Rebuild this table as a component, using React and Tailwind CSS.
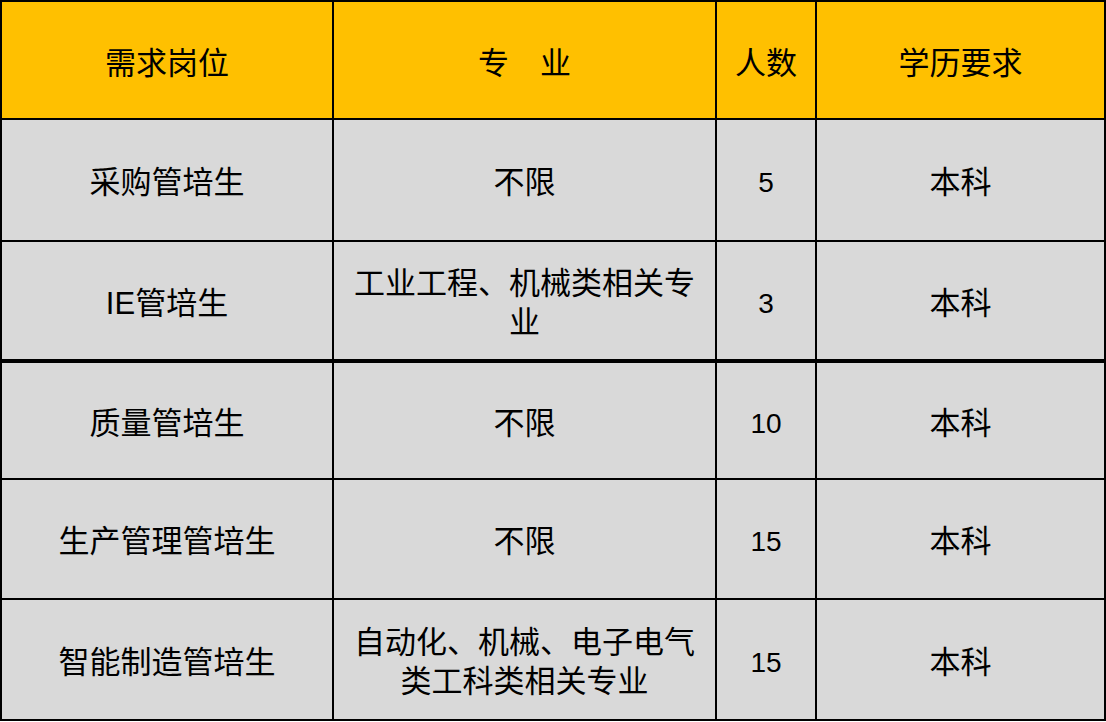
import React from "react";

// Tabla de puestos: encabezado amarillo, filas grises, bordes negros
const rows = [
  { pos: "采购管培生", major: ["不限"], num: "5", edu: "本科", h: "h-[122px]" },
  { pos: "IE管培生", major: ["工业工程、机械类相关专", "业"], num: "3", edu: "本科", h: "h-[120px]", thick: true },
  { pos: "质量管培生", major: ["不限"], num: "10", edu: "本科", h: "h-[118px]" },
  { pos: "生产管理管培生", major: ["不限"], num: "15", edu: "本科", h: "h-[120px]" },
  { pos: "智能制造管培生", major: ["自动化、机械、电子电气", "类工科类相关专业"], num: "15", edu: "本科", h: "h-[121px]" },
];

export default function App() {
  const font = { fontFamily: '"Liberation Sans", "Noto Sans CJK SC", sans-serif' };

  return (
    <div className="w-[1106px] h-[722px] bg-white" style={font}>
      <table className="border-collapse table-fixed w-[1104px] text-[31px] text-black leading-[39px]">
        <colgroup>
          <col className="w-[332px]" />
          <col className="w-[383px]" />
          <col className="w-[100px]" />
          <col className="w-[289px]" />
        </colgroup>
        <thead>
          <tr className="h-[118px] bg-[#ffc000]">
            <th className="border-[2px] border-black font-normal text-center pt-[6px]">需求岗位</th>
            <th className="border-[2px] border-black font-normal text-center pt-[6px]">专　业</th>
            <th className="border-[2px] border-black font-normal text-center pt-[6px]">人数</th>
            <th className="border-[2px] border-black font-normal text-center pt-[6px]">学历要求</th>
          </tr>
        </thead>
        <tbody>
          {rows.map((r, i) => (
            <tr key={i} className={`${r.h} bg-[#d9d9d9]`}>
              <td className={`border-[2px] border-black text-center pt-[5px] ${r.thick ? "border-b-[4px]" : ""}`}>{r.pos}</td>
              <td className={`border-[2px] border-black text-center pt-[5px] ${r.thick ? "border-b-[4px]" : ""}`}>
                {r.major.map((m, j) => (
                  <div key={j}>{m}</div>
                ))}
              </td>
              <td className={`border-[2px] border-black text-center pt-[5px] text-[28px] ${r.thick ? "border-b-[4px]" : ""}`}>{r.num}</td>
              <td className={`border-[2px] border-black text-center pt-[5px] ${r.thick ? "border-b-[4px]" : ""}`}>{r.edu}</td>
            </tr>
          ))}
        </tbody>
      </table>
    </div>
  );
}
